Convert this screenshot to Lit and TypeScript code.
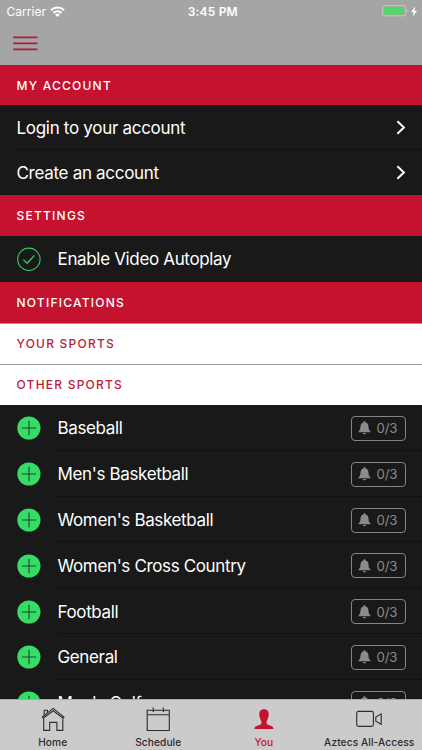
import { LitElement, html, svg, css } from "lit";
import { customElement, property } from "lit/decorators.js";

@customElement("status-bar")
class StatusBar extends LitElement {
  static styles = css`
    :host { display: grid; grid-template-columns: 1fr auto 1fr; align-items: center; height: 22px; color: #fff; font-size: 12px; }
    .left { display: flex; align-items: center; gap: 5px; padding-left: 6.5px; letter-spacing: 0.05px; }
    .time { font-weight: 600; letter-spacing: 0.2px; padding-left: 3.5px; }
    .right { display: flex; justify-content: flex-end; align-items: center; gap: 3px; padding-right: 5px; }
    .left svg { margin-left: -1px; }
    svg { display: block; }
  `;
  render() {
    return html`
      <div class="left"><span>Carrier</span>
        <svg width="15" height="11" viewBox="0 0 15 11" fill="none" stroke="#fff" stroke-width="2.1">
          <path d="M1 4.2 C4.6 .5 10.4 .5 14 4.2 M3.4 6.9 C5.8 4.6 9.2 4.6 11.6 6.9" />
          <path d="M7.5 10.9 L5.1 8.5 C6.5 7.3 8.5 7.3 9.9 8.5 Z" fill="#fff" stroke="none" />
        </svg>
      </div>
      <div class="time">3:45 PM</div>
      <div class="right">
        <svg width="26" height="12" viewBox="0 0 26 12">
          <rect x=".7" y=".6" width="23" height="10.2" rx="2" fill="none" stroke="#c9c9c9" />
          <rect x="2" y="2" width="19" height="7.4" rx=".8" fill="#4cd964" />
          <path d="M24.7 4 Q26.2 5.8 24.7 7.6Z" fill="#c9c9c9" />
        </svg>
        <svg width="6" height="11" viewBox="0 0 6 11"><path d="M4.2 .5 L0 6.1 H2.5 L1.7 10.5 L6 4.8 H3.5Z" fill="#fff" /></svg>
      </div>`;
  }
}

@customElement("section-title")
class SectionTitle extends LitElement {
  @property({ type: Boolean, reflect: true }) light = false;
  static styles = css`
    :host { display: flex; align-items: center; box-sizing: border-box; height: 41px; padding-left: 16.5px; background: #c5122f; color: #fff; font-size: 12px; font-weight: 500; letter-spacing: 1.23px; }
    :host([light]) { background: #fff; color: #b9203c; border-top: 1px solid #98989a; padding-bottom: 1px; }
  `;
  render() { return html`<slot></slot>`; }
}

@customElement("link-row")
class LinkRow extends LitElement {
  static styles = css`
    :host { display: flex; align-items: center; justify-content: space-between; box-sizing: border-box; height: 45px; padding: 0 16.5px 0 16.5px; color: #fff; font-size: 17px; letter-spacing: -0.3px; }
    svg { display: block; }
  `;
  render() {
    return html`<slot></slot>
      <svg width="10" height="15" viewBox="0 0 10 15"><path d="M1.4 1.2 L7.9 7.5 L1.4 13.8" fill="none" stroke="#fff" stroke-width="2" /></svg>`;
  }
}

@customElement("sport-row")
class SportRow extends LitElement {
  @property() name = "";
  static styles = css`
    :host { display: flex; align-items: center; box-sizing: border-box; height: 45.8px; padding: 1.2px 16.5px 0 16.5px; color: #fff; font-size: 17px; letter-spacing: -0.36px; }
    .name { flex: 1; margin-left: 17px; }
    .badge { display: flex; align-items: center; box-sizing: border-box; width: 55px; height: 25px; padding-left: 6.5px; gap: 5.5px; border: 1px solid #858585; border-radius: 4px; color: #8b8b8b; font-size: 13.2px; letter-spacing: -0.1px; }
    svg { display: block; flex: none; }
  `;
  render() {
    return html`
      <svg width="24" height="24" viewBox="0 0 24 24"><circle cx="11.9" cy="12" r="11.6" fill="#37dc66" /><path d="M12 4.8 V19.2 M4.8 12 H19.2" stroke="#1b4d29" stroke-width="1.1" /></svg>
      <span class="name">${this.name}</span>
      <span class="badge">
        <svg width="13" height="14" viewBox="0 0 13 14" fill="#8b8b8b"><path d="M6.5 .3 C7.2 .3 7.6 .8 7.6 1.4 C9.6 1.9 10.4 3.5 10.5 5.5 C10.6 8.3 11.1 9.2 12.4 10.2 V11.2 H.6 V10.2 C1.9 9.2 2.4 8.3 2.5 5.5 C2.6 3.5 3.4 1.9 5.4 1.4 C5.4 .8 5.8 .3 6.5 .3Z M4.9 12 H8.1 C7.9 13.7 5.1 13.7 4.9 12Z" /></svg>
        <span>0/3</span>
      </span>`;
  }
}

const icons = {
  home: svg`<g fill="none" stroke="#2d2d2d" stroke-width="1.1"><path d="M3.7 11.8 V23.4 H9.7 V15.4 H16.9 V23.4 H22.8 V11.8"/><path d="M2.4 10 L13.2 1.4 L24 10 L23.1 11.3 L13.2 3.8 L3.3 11.3Z"/><path d="M4.2 8.4 V3.3 H7.4 V5.8"/></g>`,
  schedule: svg`<g fill="none" stroke="#2d2d2d" stroke-width="1.1"><path d="M2.2 3.2 H24.3 V23.5 H2.2Z M2.2 7.7 H24.3 M8.2 .5 V5 M18.4 .5 V5"/></g>`,
  you: svg`<path fill="#c5122f" transform="translate(.5 .3)" d="M12.5 2 C16 2 17.4 4.3 17.2 7.5 C17 10.5 16.2 12 15.2 13.7 C14.6 15.3 15 16.9 16.8 17.6 C20 18.6 21.8 18.8 22 21.8 H3 C3.2 18.8 5 18.6 8.2 17.6 C10 16.9 10.4 15.3 9.8 13.7 C8.8 12 8 10.5 7.8 7.5 C7.6 4.3 9 2 12.5 2Z"/>`,
  video: svg`<g fill="none" stroke="#2d2d2d" stroke-width="1.1"><rect x="0.7" y="4.4" width="16.7" height="15" rx="1.8"/><path d="M25.2 6.9 V17.3 L19.8 14.1 V10.1Z"/></g>`,
};

@customElement("tab-bar")
class TabBar extends LitElement {
  static styles = css`
    :host { display: grid; grid-template-columns: repeat(4, 1fr); flex: none; box-sizing: border-box; height: 51px; border-top: 1px solid #a9a9a9; background: #cbcbcb; color: #2b2b2b; font-size: 10.2px; font-weight: 500; letter-spacing: 0.08px; }
    .tab { display: flex; flex-direction: column; align-items: center; padding-top: 7px; white-space: nowrap; }
    .active { color: #c5122f; }
    svg { display: block; }
    .label { line-height: 12px; margin-top: 4px; }
  `;
  render() {
    const tabs = [["Home", icons.home], ["Schedule", icons.schedule], ["You", icons.you], ["Aztecs All-Access", icons.video]] as const;
    return tabs.map(([label, icon]) => html`<div class="tab ${label === "You" ? "active" : ""}">
      <svg width="26" height="25" viewBox="0 0 26 25">${icon}</svg><span class="label">${label}</span></div>`);
  }
}

@customElement("app-root")
class AppRoot extends LitElement {
  static styles = css`
    :host { display: flex; flex-direction: column; width: 422px; height: 750px; overflow: hidden; background: #191919; font-family: Inter, "Liberation Sans", sans-serif; }
    .header { flex: none; height: 65px; background: #a5a5a5; }
    .menu { display: block; margin: 14px 0 0 13px; }
    .content { flex: 1; min-height: 0; overflow: hidden; }
    .account { height: 40px; }
    .divider { height: 1px; margin: -1px 0 0 17px; background: #101010; }
    .inset { margin-left: 57px; }
    .setting { display: flex; align-items: center; gap: 17px; box-sizing: border-box; height: 46px; padding: 0 0 0 16.5px; color: #fff; font-size: 17px; letter-spacing: -0.34px; }
    .setting svg { display: block; }
  `;
  render() {
    const sports = ["Baseball", "Men's Basketball", "Women's Basketball", "Women's Cross Country", "Football", "General", "Men's Golf"];
    return html`
      <div class="header">
        <status-bar></status-bar>
        <svg class="menu" width="25" height="15" viewBox="0 0 25 15"><path d="M.3 1.4 H24.5 M.3 7.4 H24.5 M.3 13.4 H24.5" stroke="#b5183a" stroke-width="1.8" /></svg>
      </div>
      <div class="content">
        <section-title class="account">MY ACCOUNT</section-title>
        <link-row>Login to your account</link-row>
        <div class="divider"></div>
        <link-row>Create an account</link-row>
        <section-title>SETTINGS</section-title>
        <div class="setting">
          <svg width="24" height="24" viewBox="0 0 24 24" fill="none" stroke="#37c95f"><circle cx="11.9" cy="12.3" r="11.2" stroke-width="1.1" /><path d="M6.4 12.7 L10.1 16.3 L17.4 8.5" stroke-width="1.3" /></svg>
          <span>Enable Video Autoplay</span>
        </div>
        <section-title>NOTIFICATIONS</section-title>
        <section-title light>YOUR SPORTS</section-title>
        <section-title light>OTHER SPORTS</section-title>
        ${sports.map((s, i) => html`<sport-row .name=${s}></sport-row>${i < sports.length - 1 ? html`<div class="divider inset"></div>` : ""}`)}
      </div>
      <tab-bar></tab-bar>`;
  }
}
